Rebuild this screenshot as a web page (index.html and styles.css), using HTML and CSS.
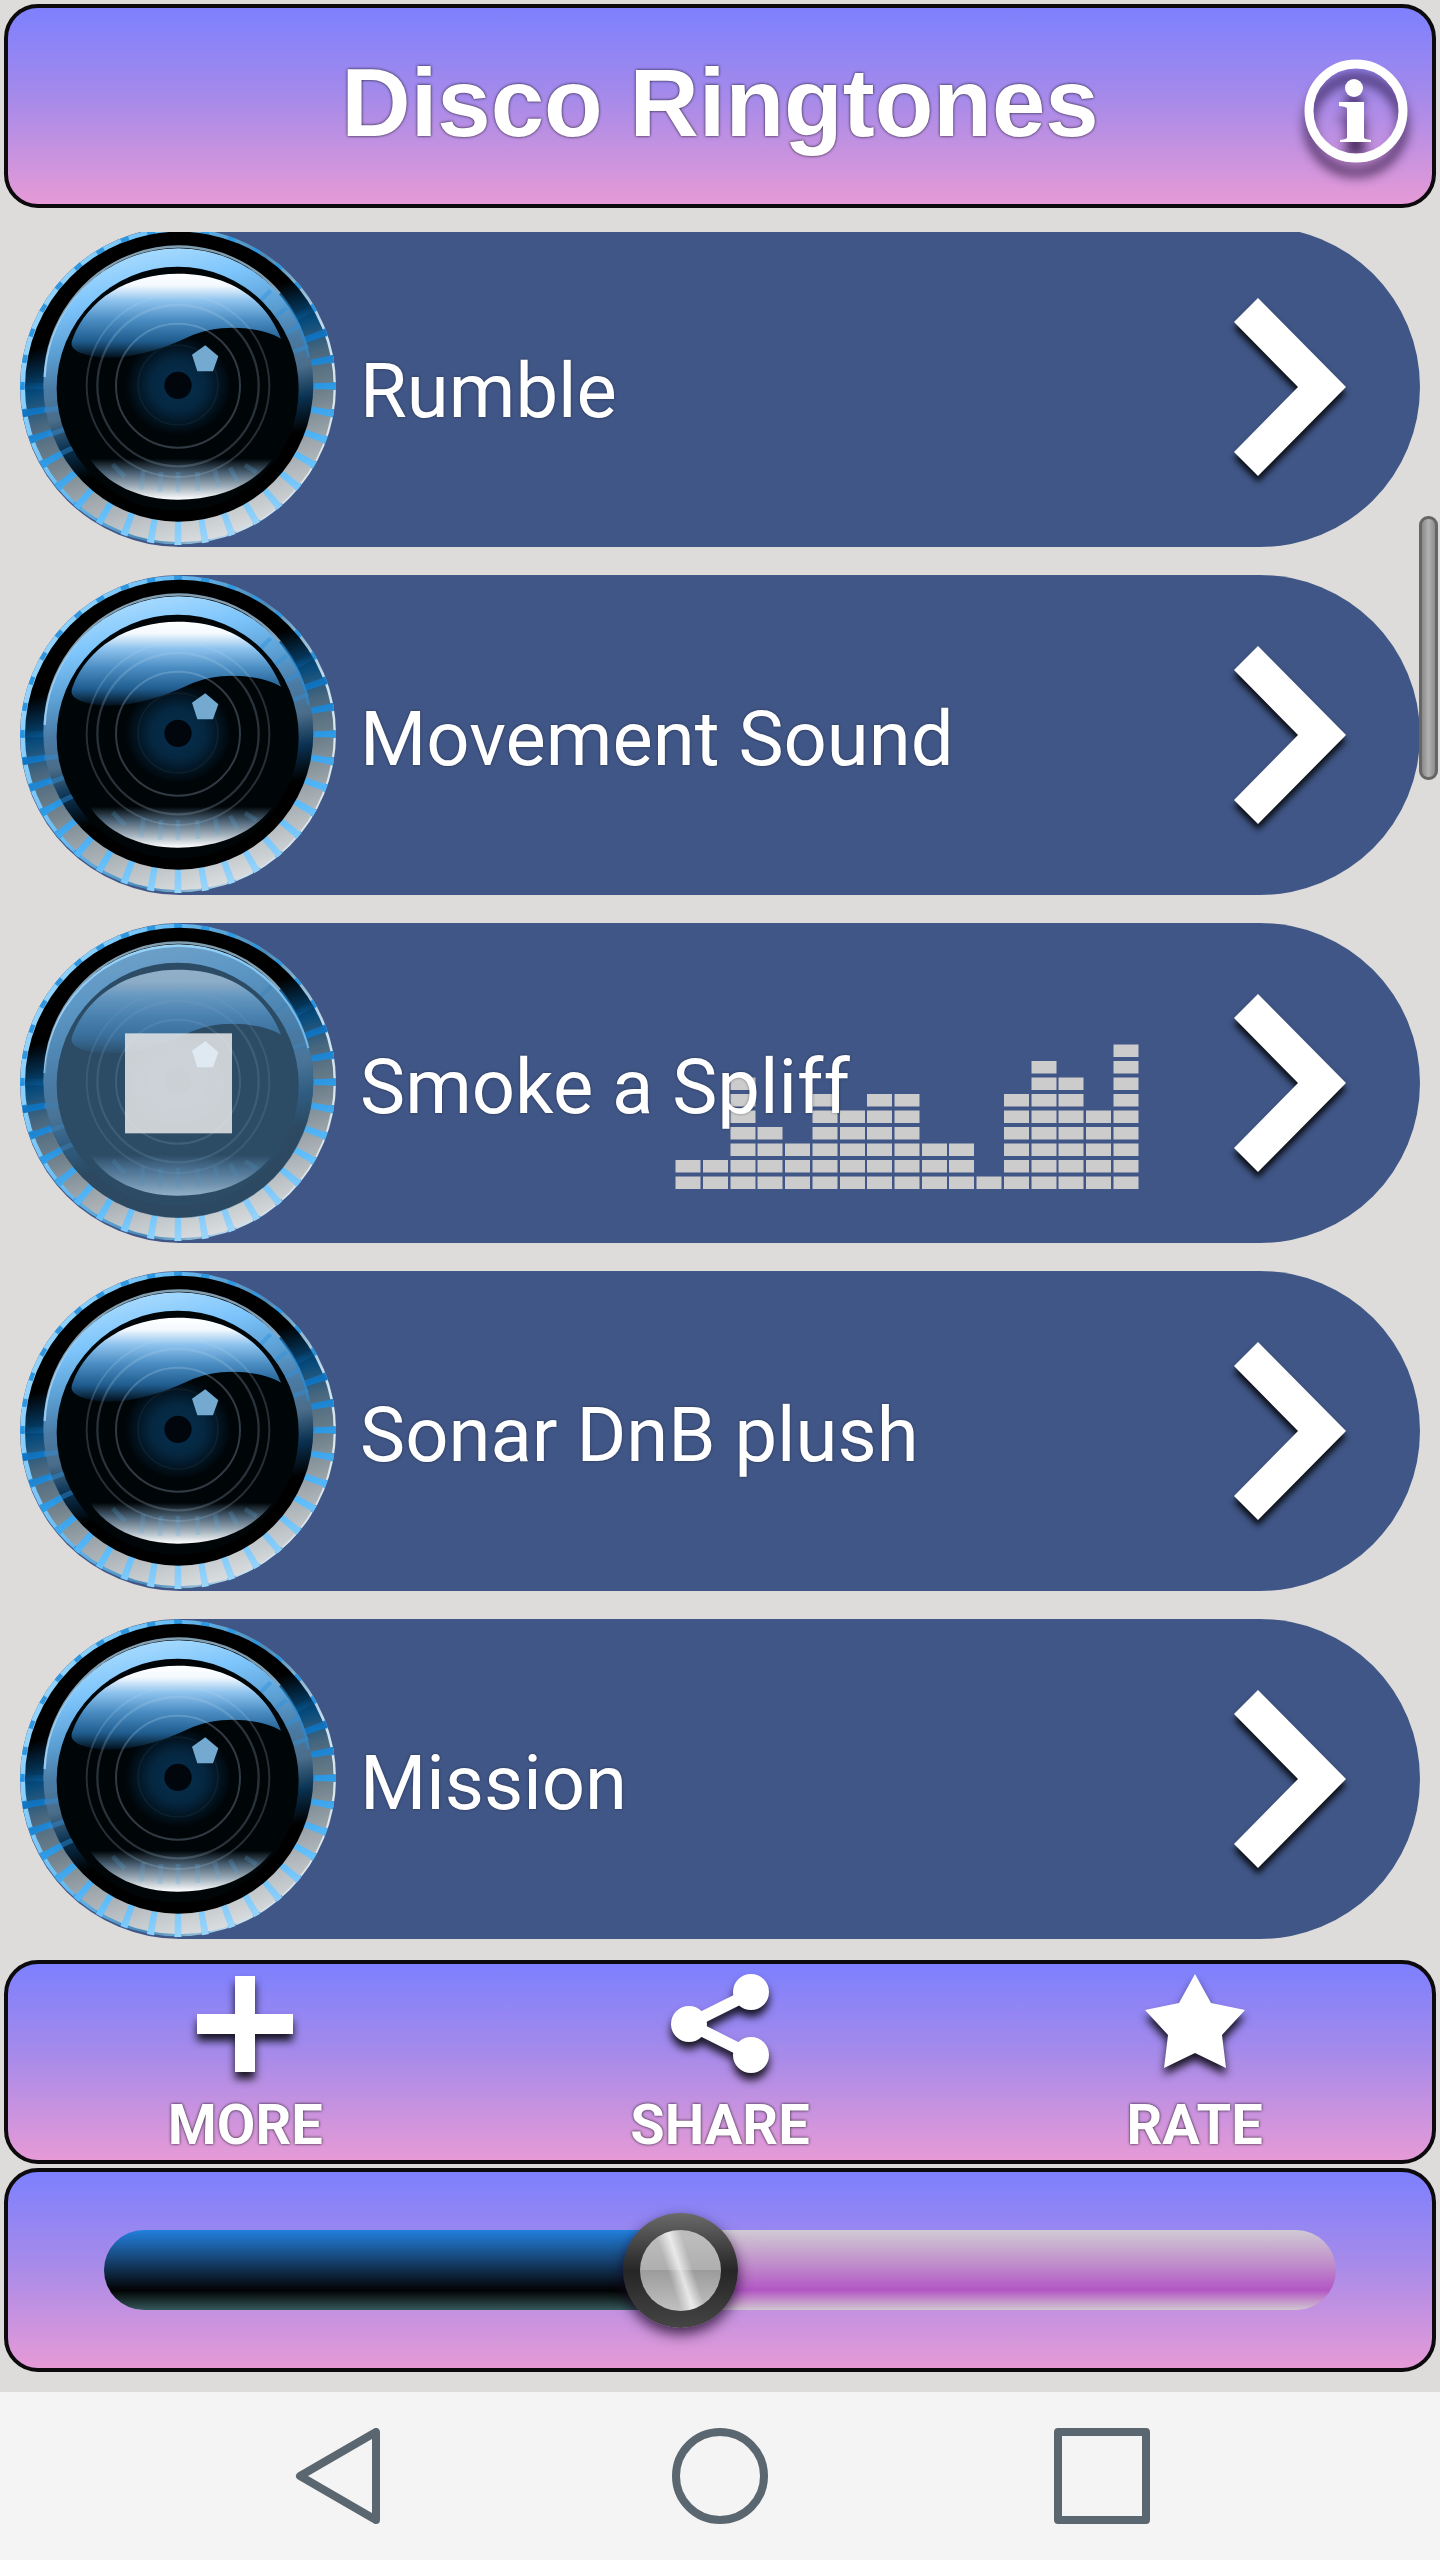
FILE: index.html
```
<!DOCTYPE html>
<html lang="en">
<head>
    <meta charset="UTF-8">
    <meta name="viewport" content="width=device-width, initial-scale=1.0">
    <title>Disco Ringtones</title>
    <link rel="stylesheet" href="styles.css">
</head>
<body>
    <!-- shared shapes -->
    <svg class="defs" aria-hidden="true">
        <defs>
            <linearGradient id="outerRing" gradientUnits="userSpaceOnUse" x1="420" y1="60" x2="670" y2="1000">
                <stop offset="0" stop-color="#000"/>
                <stop offset="0.27" stop-color="#000"/>
                <stop offset="0.4" stop-color="#064a7c"/>
                <stop offset="0.5" stop-color="#47677f"/>
                <stop offset="0.62" stop-color="#6d7f8a"/>
                <stop offset="0.78" stop-color="#a3abb0"/>
                <stop offset="1" stop-color="#e0e3e5"/>
            </linearGradient>
            <linearGradient id="rays" gradientUnits="userSpaceOnUse" x1="420" y1="60" x2="670" y2="1000">
                <stop offset="0.36" stop-color="#0a6db8" stop-opacity="0"/>
                <stop offset="0.46" stop-color="#0f74c2"/>
                <stop offset="0.62" stop-color="#2f9be6"/>
                <stop offset="0.8" stop-color="#5cbcfb"/>
                <stop offset="1" stop-color="#a4d8fa"/>
            </linearGradient>
            <linearGradient id="rim" gradientUnits="userSpaceOnUse" x1="60" y1="300" x2="1008" y2="700">
                <stop offset="0" stop-color="#9bd8fd"/>
                <stop offset="0.3" stop-color="#6abff8"/>
                <stop offset="0.6" stop-color="#4a8ab8"/>
                <stop offset="0.85" stop-color="#c9e2f0"/>
                <stop offset="1" stop-color="#e4e8ea"/>
            </linearGradient>
            <linearGradient id="innerRing" gradientUnits="userSpaceOnUse" x1="440" y1="115" x2="620" y2="933">
                <stop offset="0" stop-color="#a8dbff"/>
                <stop offset="0.15" stop-color="#7cc4fb"/>
                <stop offset="0.3" stop-color="#5a9ed2"/>
                <stop offset="0.42" stop-color="#4a7ba5"/>
                <stop offset="0.53" stop-color="#4a6d8a"/>
                <stop offset="0.64" stop-color="#0a3252"/>
                <stop offset="0.76" stop-color="#000"/>
                <stop offset="1" stop-color="#000"/>
            </linearGradient>
            <linearGradient id="glass" x1="0" y1="0" x2="0" y2="1">
                <stop offset="0" stop-color="#fff"/>
                <stop offset="0.14" stop-color="#f4f9fe"/>
                <stop offset="0.32" stop-color="#8ec3ee"/>
                <stop offset="0.55" stop-color="#4b8dc3"/>
                <stop offset="0.8" stop-color="#205d8f"/>
                <stop offset="1" stop-color="#02101c"/>
            </linearGradient>
            <linearGradient id="glassLow" x1="0" y1="0" x2="0" y2="1">
                <stop offset="0" stop-color="#000508"/>
                <stop offset="0.35" stop-color="#4c6376"/>
                <stop offset="0.7" stop-color="#a5b3be"/>
                <stop offset="1" stop-color="#fff"/>
            </linearGradient>
            <radialGradient id="iris">
                <stop offset="0" stop-color="#07304e"/>
                <stop offset="0.5" stop-color="#052741"/>
                <stop offset="1" stop-color="#000508"/>
            </radialGradient>
        </defs>

        <symbol id="lens" viewBox="60 50 948 960" preserveAspectRatio="none">
            <ellipse cx="534" cy="527" rx="474" ry="475" fill="url(#rim)"/>
            <ellipse cx="534" cy="527" rx="467" ry="468" fill="none" stroke="#2d97e2" stroke-width="14" pathLength="360" stroke-dasharray="3 7" stroke-dashoffset="1.5"/>
            <ellipse cx="538" cy="530" rx="463" ry="466" fill="url(#outerRing)"/>
            <ellipse cx="534" cy="527" rx="436" ry="440" fill="none" stroke="url(#rays)" stroke-width="74" pathLength="360" stroke-dasharray="2.6 7.4" stroke-dashoffset="1.3"/>
            <ellipse cx="535" cy="524" rx="405" ry="410" fill="url(#innerRing)"/>
            <!-- ray reflections on the inner ring -->
            <g fill="none" stroke="#2f90dc" opacity="0.45">
                <path d="M778 274L812 240M822 322L860 292M850 372L900 344M880 425L925 408" stroke-width="13"/>
                <path d="M132 600L178 594M145 675L196 656M165 738L220 712" stroke-width="15"/>
            </g>
            <path d="M134 500A402 407 0 0 1 840 250" fill="none" stroke="#b9e2fd" stroke-width="7" opacity="0.7"/>
            <path d="M840 250A402 407 0 0 1 925 440" fill="none" stroke="#2a8ed6" stroke-width="7" opacity="0.6"/>
            <ellipse cx="533" cy="535" rx="363" ry="366" fill="#000508"/>
            <ellipse cx="534" cy="525" rx="160" ry="150" fill="url(#iris)"/>
            <path d="M270 745H818C755 830 650 868 534 868S320 822 270 745Z" fill="url(#glassLow)"/>
            <path d="M338 762L375 800M430 780L424 838M483 785L480 845M534 785V846M592 785L594 842M645 780L655 830M690 772L712 812M735 764L770 786" fill="none" stroke="#58aeea" stroke-width="14" opacity="0.22"/>
            <path d="M218 385C262 268 382 190 534 190S795 262 843 385C770 345 650 340 565 380C460 430 330 462 242 428C216 416 210 405 218 385Z" fill="url(#glass)"/>
            <g fill="none" stroke="#b5d6ee">
                <circle cx="534" cy="524" r="120" stroke-width="5" opacity="0.06"/>
                <circle cx="534" cy="526" r="186" stroke-width="6" opacity="0.26"/>
                <circle cx="534" cy="526" r="242" stroke-width="7" opacity="0.22"/>
                <circle cx="534" cy="526" r="274" stroke-width="6" opacity="0.2"/>
            </g>
            <circle cx="534" cy="525" r="41" fill="#01060d"/>
            <path d="M616 405L655 438L639 483H592L576 433Z" fill="#74a9d0"/>
        </symbol>

        <symbol id="chevron" viewBox="0 0 112 178">
            <path d="M24 0L112 89L24 178L0 154L64 89L0 24Z" fill="#fff"/>
        </symbol>
    </svg>

    <div class="app">
        <header class="panel header">
            <h1>Disco Ringtones</h1>
            <button class="info" type="button" aria-label="Info">
                <svg viewBox="0 0 104 104" width="104" height="104">
                    <circle cx="52" cy="52" r="47" fill="none" stroke="#fff" stroke-width="9"/>
                    <circle cx="50" cy="29" r="9" fill="#fff"/>
                    <path d="M35 43H60V78C60 80 62 80 67 81V83H36V81C41 80 43 80 43 78V50C43 48 41 48 35 47Z" fill="#fff"/>
                </svg>
            </button>
        </header>

        <main class="list">
            <ul>
                <li>
                    <button class="row" type="button">
                        <svg class="lens"><use href="#lens"/></svg>
                        <span class="name">Rumble</span>
                        <svg class="chevron"><use href="#chevron"/></svg>
                    </button>
                </li>
                <li>
                    <button class="row" type="button">
                        <svg class="lens"><use href="#lens"/></svg>
                        <span class="name">Movement Sound</span>
                        <svg class="chevron"><use href="#chevron"/></svg>
                    </button>
                </li>
                <li>
                    <button class="row" type="button">
                        <svg class="lens" viewBox="60 50 948 960" preserveAspectRatio="none">
                            <use href="#lens" x="60" y="50" width="948" height="960"/>
                            <ellipse cx="536" cy="528" rx="404" ry="407" fill="#497aa2" opacity="0.6"/>
                            <path d="M315 184A404 407 0 0 1 925 425" fill="none" stroke="#8fd0f5" stroke-width="6" opacity="0.7"/>
                            <rect x="375" y="381" width="321" height="300" fill="#e7e7e7" opacity="0.85"/>
                            <path d="M616 405L655 438L639 483H592L576 433Z" fill="#e2ecf5" opacity="0.8"/>
                        </svg>
                        <!-- equalizer, one path per bar -->
                        <svg class="equalizer" viewBox="0 0 464 146" fill="none" stroke="#ccc" stroke-width="25" stroke-dasharray="12.5 4">
                            <path d="M13 146v-30"/>
                            <path d="M40.5 146v-30"/>
                            <path d="M68 146v-112"/>
                            <path d="M95 146v-63"/>
                            <path d="M122.5 146v-46"/>
                            <path d="M150 146v-96"/>
                            <path d="M177.5 146v-79"/>
                            <path d="M204.5 146v-96"/>
                            <path d="M232 146v-96"/>
                            <path d="M259.5 146v-46"/>
                            <path d="M286.5 146v-46"/>
                            <path d="M314 146v-13"/>
                            <path d="M341.5 146v-96"/>
                            <path d="M369 146v-129"/>
                            <path d="M396 146v-112"/>
                            <path d="M423.5 146v-79"/>
                            <path d="M451 146v-145"/>
                        </svg>
                        <span class="name">Smoke a Spliff</span>
                        <svg class="chevron"><use href="#chevron"/></svg>
                    </button>
                </li>
                <li>
                    <button class="row" type="button">
                        <svg class="lens"><use href="#lens"/></svg>
                        <span class="name">Sonar DnB plush</span>
                        <svg class="chevron"><use href="#chevron"/></svg>
                    </button>
                </li>
                <li>
                    <button class="row" type="button">
                        <svg class="lens"><use href="#lens"/></svg>
                        <span class="name">Mission</span>
                        <svg class="chevron"><use href="#chevron"/></svg>
                    </button>
                </li>
            </ul>
        </main>
        <div class="scroll-thumb"></div>

        <div class="panel actions">
            <button type="button">
                <svg viewBox="0 0 100 100"><path d="M40 2H60V40H98V60H60V98H40V60H2V40H40Z" fill="#fff"/></svg>
                <span>MORE</span>
            </button>
            <button type="button">
                <svg viewBox="0 0 100 100">
                    <path d="M81 19L19 50L81 81" fill="none" stroke="#fff" stroke-width="12"/>
                    <g fill="#fff"><circle cx="81" cy="18" r="18"/><circle cx="19" cy="50" r="18"/><circle cx="81" cy="81" r="18"/></g>
                </svg>
                <span>SHARE</span>
            </button>
            <button type="button">
                <svg viewBox="0 0 100 100"><path d="M50 0L66 29L100 36L77 61L81 94L50 79L19 94L23 61L0 36L34 29Z" fill="#fff"/></svg>
                <span>RATE</span>
            </button>
        </div>

        <div class="panel volume">
            <input type="range" min="0" max="1000" value="465" aria-label="Volume">
        </div>

        <nav class="navbar">
            <button type="button" aria-label="Back">
                <svg viewBox="0 0 96 96"><path d="M86 4V92L10 48Z"/></svg>
            </button>
            <button type="button" aria-label="Home">
                <svg viewBox="0 0 96 96"><circle cx="48" cy="48" r="44"/></svg>
            </button>
            <button type="button" aria-label="Recent apps">
                <svg viewBox="0 0 96 96"><rect x="4" y="4" width="88" height="88"/></svg>
            </button>
        </nav>
    </div>
</body>
</html>
```

FILE: styles.css
```
* {
    box-sizing: border-box;
}

body {
    margin: 0;
    background: #dddcda;
    font-family: Roboto, "Noto Sans", sans-serif;
    color: #fff;
}

button {
    margin: 0;
    padding: 0;
    border: none;
    background: none;
    color: inherit;
    font-family: inherit;
    cursor: pointer;
}

svg {
    display: block;
}

.defs {
    position: absolute;
    width: 0;
    height: 0;
}

.app {
    position: relative;
    display: flex;
    flex-direction: column;
    height: 100vh;
}

/* panels */
.panel {
    flex: none;
    height: 204px;
    margin: 0 4px;
    border: 4px solid #0c0a0c;
    border-radius: 34px;
    background: linear-gradient(#7d80fe, #a58aea 45%, #e69ad6);
}

.header {
    position: relative;
    display: flex;
    align-items: center;
    justify-content: center;
    margin-top: 4px;
    margin-bottom: 24px;
}

.header h1 {
    margin: 0;
    padding-bottom: 6px;
    font-family: "Liberation Sans", Arial, sans-serif;
    font-size: 96px;
    line-height: 108px;
    font-weight: bold;
    text-shadow: 0 0 3px rgba(0, 0, 0, 0.9);
}

.info {
    position: absolute;
    top: 51px;
    right: 24px;
}

.info svg {
    overflow: visible;
    filter: drop-shadow(0 14px 6px rgba(30, 10, 50, 0.75));
}

/* ringtone list */
.list {
    flex: 1;
    min-height: 0;
    overflow: hidden;
    padding: 0 20px;
}

.list ul {
    display: flex;
    flex-direction: column;
    gap: 28px;
    margin: -5px 0 0;
    padding: 0;
    list-style: none;
}

.row {
    position: relative;
    display: flex;
    align-items: center;
    width: 100%;
    height: 320px;
    padding-right: 74px;
    border-radius: 160px;
    background: #405686;
    overflow: hidden;
    text-align: left;
}

.lens {
    flex: none;
    width: 316px;
    height: 320px;
}

.name {
    position: relative;
    flex: 1;
    padding: 8px 0 0 24px;
    font-size: 76px;
    line-height: 88px;
    text-shadow: 0 0 3px rgba(0, 0, 0, 0.4);
}

.chevron {
    flex: none;
    width: 112px;
    height: 178px;
    overflow: visible;
    filter: drop-shadow(0 6px 3px rgba(0, 0, 0, 0.85));
}

.equalizer {
    position: absolute;
    right: 281px;
    bottom: 54px;
    width: 464px;
    height: 146px;
}

.scroll-thumb {
    position: absolute;
    top: 516px;
    right: 2px;
    width: 19px;
    height: 264px;
    border: 3px solid #666;
    border-radius: 9px;
    background: linear-gradient(90deg, #8a8a8a, #b2b2b2 50%, #8c8c8c);
}

/* bottom actions */
.actions {
    display: grid;
    grid-template-columns: repeat(3, 1fr);
    margin-top: 20px;
}

.actions button {
    display: flex;
    flex-direction: column;
    align-items: center;
    padding-top: 10px;
    font-size: 56px;
    line-height: 64px;
    font-weight: bold;
}

.actions svg {
    width: 100px;
    height: 100px;
    margin-bottom: 19px;
    overflow: visible;
    filter: drop-shadow(0 7px 4px rgba(0, 0, 0, 0.85));
}

.actions span {
    text-shadow: 0 0 3px rgba(0, 0, 0, 0.9);
}

/* volume slider */
.volume {
    display: flex;
    align-items: center;
    margin-top: 4px;
    margin-bottom: 20px;
    padding: 0 96px;
}

.volume input {
    -webkit-appearance: none;
    appearance: none;
    width: 100%;
    height: 80px;
    margin: 0;
    border-radius: 40px;
    background:
        linear-gradient(#2280de, #174677 36%, #05080d 72%, #020404 76%, #35585a) left / 47% 100% no-repeat,
        linear-gradient(#d0cad4, #c08ecb 42%, #b356c4 75%, #d0c6d0);
}

.volume input::-webkit-slider-thumb {
    -webkit-appearance: none;
    width: 115px;
    height: 115px;
    border: 17px solid transparent;
    border-radius: 50%;
    background:
        linear-gradient(72deg, transparent 38%, rgba(255, 255, 255, 0.7) 50%, transparent 62%) padding-box,
        linear-gradient(#bcbcbc 10%, #afafaf 49%, #9c9c9c 50%, #c0c0c0) padding-box,
        linear-gradient(#6a6a6a, #262626 50%, #454545) border-box;
    box-shadow: 0 6px 14px rgba(20, 0, 30, 0.75);
}

/* system navigation */
.navbar {
    flex: none;
    display: grid;
    grid-template-columns: repeat(3, 26.5%);
    justify-content: center;
    align-items: center;
    justify-items: center;
    height: 168px;
    background: #f4f4f4;
}

.navbar svg {
    width: 96px;
    height: 96px;
    fill: none;
    stroke: #5a6770;
    stroke-width: 8px;
    stroke-linejoin: round;
}
```
